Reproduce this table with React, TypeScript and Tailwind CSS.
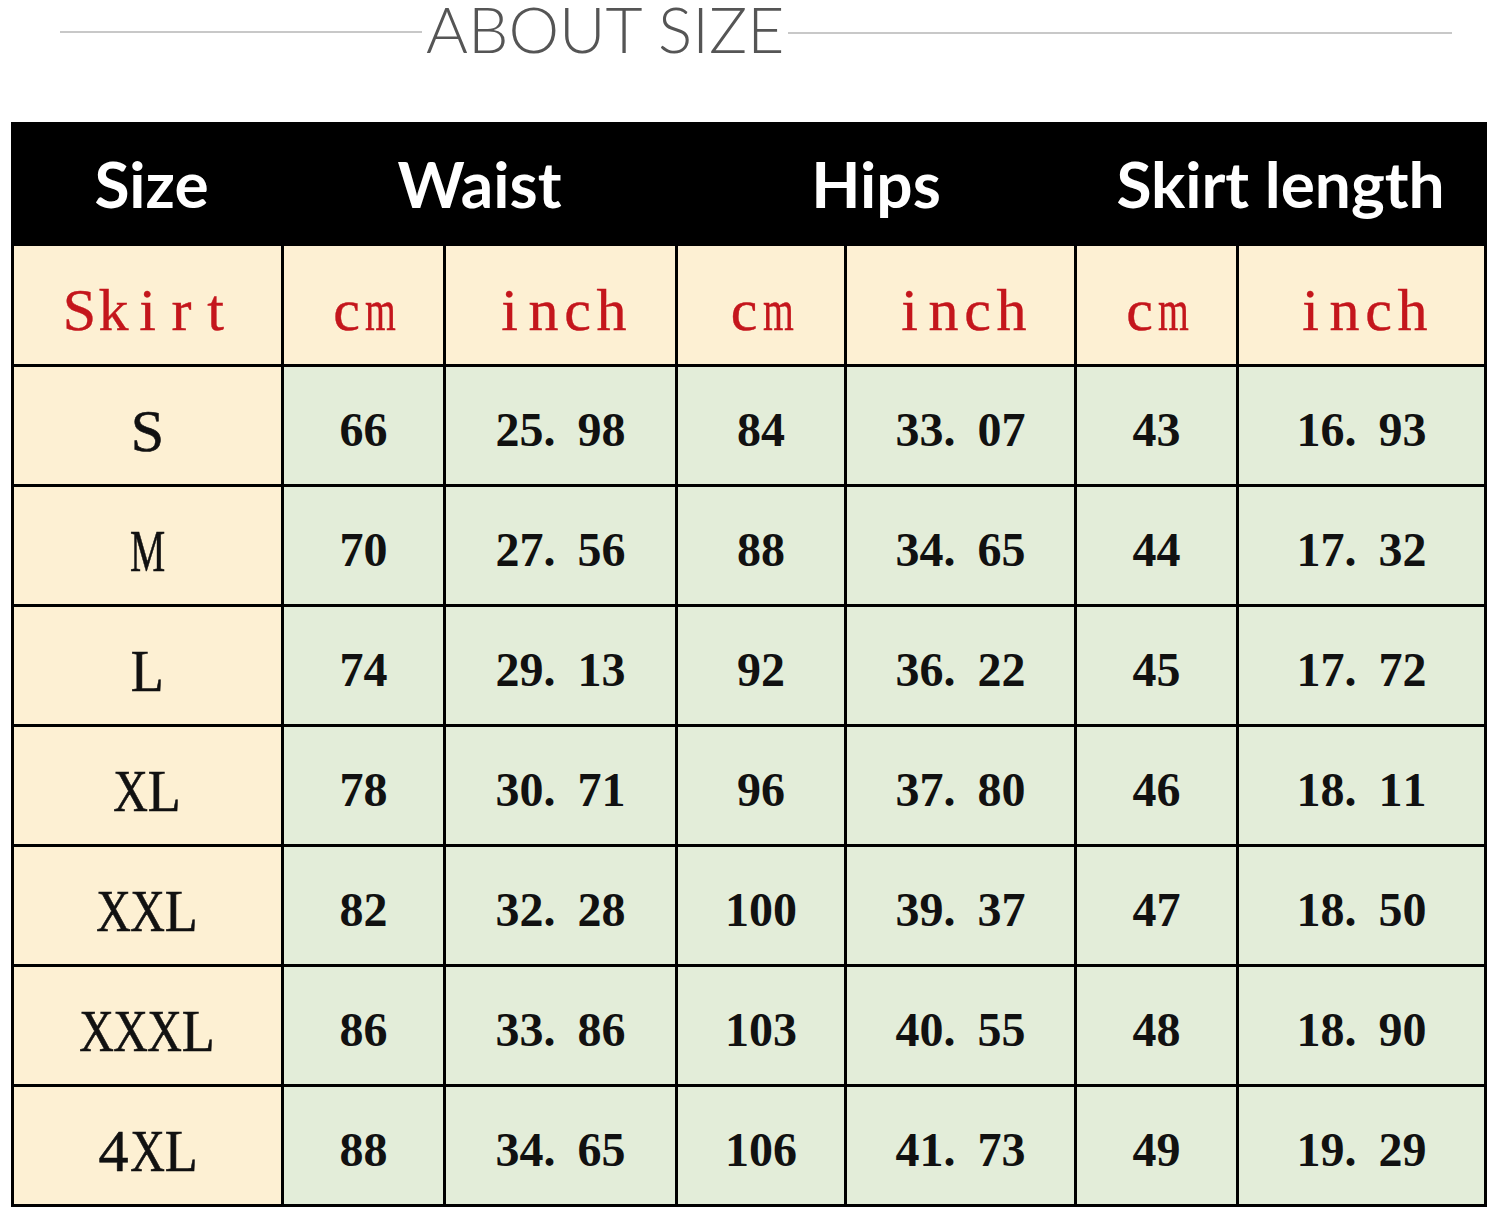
const rows = [
  ["S", "66", "25. 98", "84", "33. 07", "43", "16. 93"],
  ["M", "70", "27. 56", "88", "34. 65", "44", "17. 32"],
  ["L", "74", "29. 13", "92", "36. 22", "45", "17. 72"],
  ["XL", "78", "30. 71", "96", "37. 80", "46", "18. 11"],
  ["XXL", "82", "32. 28", "100", "39. 37", "47", "18. 50"],
  ["XXXL", "86", "33. 86", "103", "40. 55", "48", "18. 90"],
  ["4XL", "88", "34. 65", "106", "41. 73", "49", "19. 29"],
]

const units = ["cm", "inch", "cm", "inch", "cm", "inch"]

// the picture uses a serif monospace face, so each glyph gets its own fixed cell
function Wide({ text }: { text: string }) {
  return (
    <span className="inline-flex">
      {text.split("").map((c, i) => (
        <span key={i} className="inline-flex justify-center w-[34px]">
          {c === "m" || c === "M" ? (
            <span className="inline-block shrink-0 scale-x-[0.66]">{c}</span>
          ) : c === "X" ? (
            <span className="inline-block shrink-0 scale-x-[0.8]">{c}</span>
          ) : c === "L" ? (
            <span className="inline-block shrink-0 scale-x-[0.9]">{c}</span>
          ) : (
            <span className="inline-block shrink-0">{c}</span>
          )}
        </span>
      ))}
    </span>
  )
}

function Digits({ text }: { text: string }) {
  return (
    <span className="inline-flex">
      {text.split("").map((c, i) =>
        c === "." ? (
          <span key={i} className="inline-block w-[15px] text-left">.</span>
        ) : c === " " ? (
          <span key={i} className="inline-block w-[19px]" />
        ) : (
          <span key={i} className="inline-flex justify-center w-[24px]">{c}</span>
        )
      )}
    </span>
  )
}

const head = "flex items-center justify-center text-white font-bold text-[64px] font-['Lato',sans-serif]"
const red = "bg-[#fdf0d3] flex items-center justify-center pt-[10px] text-[60px] leading-none text-[#c4161c] font-['Liberation_Serif',serif] [-webkit-text-stroke:0.4px_#c4161c]"

export default function App() {
  return (
    <div className="w-[1500px] h-[1219px] bg-white overflow-hidden">
      {/* title */}
      <div className="flex items-start h-[64px] pl-[60px] pr-[48px]">
        <div className="w-[362px] h-[2px] bg-[#c8c8c8] mt-[31px]" />
        <div className="px-[4px] text-[64px] leading-[58px] text-[#555555] font-['Lato',sans-serif] font-light">
          ABOUT SIZE
        </div>
        <div className="flex-1 h-[2px] bg-[#c8c8c8] mt-[32px]" />
      </div>

      {/* table */}
      <div className="mt-[58px] ml-[11px] w-[1476px] bg-black p-[3px] grid gap-[3px] grid-cols-[267px_159px_229px_166px_227px_159px_245px] grid-rows-[118px_118px_repeat(7,117px)]">
        <div className={`${head} pl-[8px]`}>Size</div>
        <div className={`col-span-2 ${head}`}>Waist</div>
        <div className={`col-span-2 ${head}`}>Hips</div>
        <div className={`col-span-2 ${head}`}>Skirt length</div>

        <div className={red}>
          <Wide text="Skirt" />
        </div>
        {units.map((u, i) => (
          <div key={i} className={red}>
            <Wide text={u} />
          </div>
        ))}

        {rows.map((r) => (
          <>
            <div
              key={r[0]}
              className="bg-[#fdf0d3] flex items-center justify-center pt-[10px] text-[60px] leading-none text-[#111] font-['Liberation_Serif',serif] [-webkit-text-stroke:0.6px_#111]"
            >
              <Wide text={r[0]} />
            </div>
            {r.slice(1).map((v, j) => (
              <div
                key={r[0] + j}
                className="bg-[#e3edd9] flex items-center justify-center pt-[8px] text-[48px] leading-none text-[#111] font-['Liberation_Serif',serif] font-bold"
              >
                <Digits text={v} />
              </div>
            ))}
          </>
        ))}
      </div>
    </div>
  )
}
